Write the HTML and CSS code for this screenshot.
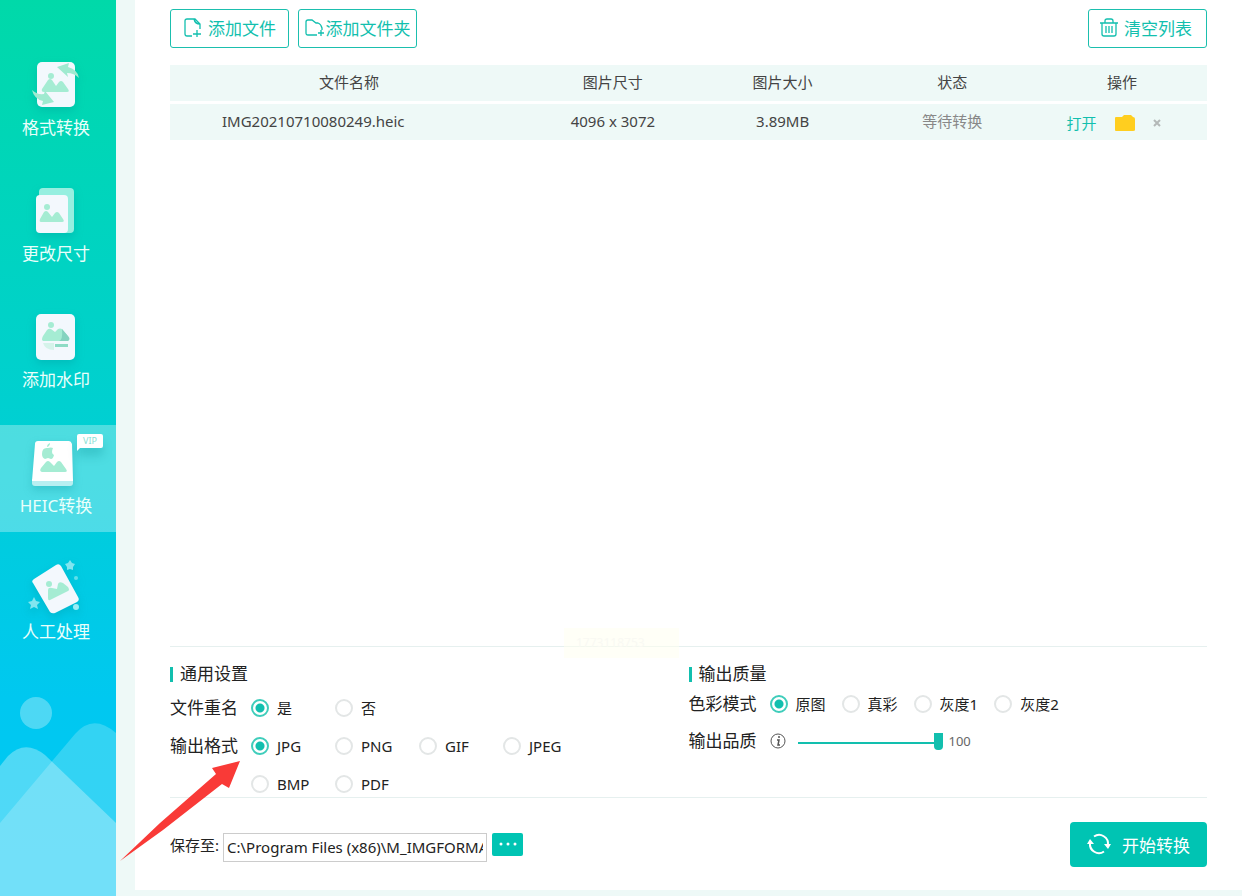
FILE: index.html
```html
<!DOCTYPE html>
<html lang="zh-CN">
<head>
  <meta charset="UTF-8">
  <meta name="viewport" content="width=device-width, initial-scale=1.0">
  <title>HEIC转换</title>
  <link rel="stylesheet" href="styles.css">
</head>
<body>
  <div class="app">
    <aside class="sidebar">
      <nav class="menu">
        <a class="menu-item" href="#format">
          <svg class="menu-icon" viewBox="0 0 48 48">
            <rect x="5" y="1" width="38" height="45" rx="5" fill="#f3f8fd"/>
            <circle cx="19" cy="15" r="3" fill="#a5ecd3"/>
            <path d="M12 31h23q3 0 1-3l-5-7q-2-2-4 0l-3 4-4-6q-2-2-4 0l-6 9q-1 3 2 3z" fill="#a5ecd3"/>
            <path d="M25 6l12-4-1 4q10 3 11 11-5-5-12-5l1 4z" fill="#a0ead0"/>
            <path d="M22 41l-12 3 1-4Q2 38 0 29q5 5 12 4l1-3z" fill="#a0ead0"/>
          </svg>
          <span>格式转换</span>
        </a>
        <a class="menu-item" href="#resize">
          <svg class="menu-icon" viewBox="0 0 48 48">
            <rect x="7" y="1" width="35" height="45" rx="4" fill="#96efe0"/>
            <rect x="4" y="8" width="32" height="38" rx="4" fill="#f3f8fd"/>
            <circle cx="15" cy="20" r="3" fill="#a5ecd3"/>
            <path d="M9 35h21q3 0 1-3l-4-6q-2-2-4 0l-3 4-4-5q-2-2-4 0l-4 7q-1 3 1 3z" fill="#a5ecd3"/>
          </svg>
          <span>更改尺寸</span>
        </a>
        <a class="menu-item" href="#watermark">
          <svg class="menu-icon" viewBox="0 0 48 48">
            <rect x="4" y="1" width="39" height="46" rx="5" fill="#f3f8fd"/>
            <circle cx="19" cy="12" r="3" fill="#a5ecd3"/>
            <path d="M11 28h25q2-3-1-6l-5-6q-2-1-4 0l-3 3-4-3q-2-1-4 1l-4 6q-2 4 0 5z" fill="#a5ecd3"/>
            <path d="M30 16l6 7q3 3 0 5h-9q4-1 3-12z" fill="#85d3bf"/>
            <path d="M11 30h11v7q-9 0-11-7z" fill="#d5f3ea"/>
            <path d="M23 31h13v3H23z" fill="#8edbc5"/>
          </svg>
          <span>添加水印</span>
        </a>
        <a class="menu-item active" href="#heic">
          <svg class="menu-icon" viewBox="0 0 48 48">
            <path d="M0 40h41v4q0 3-3 3H3q-3 0-3-3z" fill="#b8eff1"/>
            <path d="M6 2h31q2 0 3 3l1 37H0L3 5q0-3 3-3z" fill="#ffffff"/>
            <path d="M16 9q3-1 5 0-1 2-1 4 0 2 2 3-1 4-3 4l-3-1-3 1q-3-1-3-5 0-7 6-6z" fill="#a5ecd3"/>
            <path d="M15 8q0-3 3-4 0 3-3 4z" fill="#a5ecd3"/>
            <path d="M10 33h23q3 0 1-3l-5-7q-2-2-4 0l-3 4-4-4q-2-2-4 0l-5 6q-2 3 1 4z" fill="#a5ecd3"/>
          </svg>
          <span>HEIC转换</span>
          <span class="vip">VIP</span>
        </a>
        <a class="menu-item" href="#manual">
          <svg class="menu-icon" viewBox="0 0 48 48">
            <path d="M2 14L24 0q3-2 5 1l17 31q2 3-1 5L23 48q-3 1-5-1L1 18q-2-2 1-4z" fill="#f3f8fd"/>
            <circle cx="17" cy="19" r="3" fill="#a5ecd3"/>
            <path d="M18 35l18-9q2-1 0-4l-5-4q-4-2-5 1l-1 5-5-1q-4-1-4 2v8q0 3 2 2z" fill="#a5ecd3"/>
            <path d="M38-5l2 3 3 1-2 3v3l-3-1-3 1v-3l-2-3 3-1z" fill="#81e5ef"/>
            <path d="M2 32l2 4 4 1-3 3 1 4-4-2-4 2 1-4-3-3 4-1z" fill="#81e5ef"/>
            <circle cx="44" cy="13" r="2" fill="#60dfea"/>
            <circle cx="44" cy="42" r="3" fill="#9becf5"/>
          </svg>
          <span>人工处理</span>
        </a>
      </nav>
      <svg class="sidebar-art" viewBox="0 0 116 200">
        <circle cx="36" cy="17" r="16" fill="#fff" fill-opacity=".3"/>
        <path d="M0 127L75 38q18-21 41-1v163H0z" fill="#fff" fill-opacity=".2"/>
        <path d="M0 70L8 60q17-17 37-1l71 68v73H0z" fill="#fff" fill-opacity=".31"/>
      </svg>
    </aside>

    <main class="panel">
      <div class="toolbar">
        <button class="btn" type="button">
          <svg width="20" height="20" viewBox="0 0 20 20" fill="none" stroke="currentColor" stroke-width="1.3">
            <path d="M9 18H4q-2 0-2-2V3q0-2 2-2h8l5 5v5M11 1q1 5 6 5M14 12v7M10 16h8"/>
          </svg>
          添加文件
        </button>
        <button class="btn btn-folder" type="button">
          <svg width="20" height="20" viewBox="0 0 20 20" fill="none" stroke="currentColor" stroke-width="1.3">
            <path d="M12 17H3q-2 0-2-2V4q0-2 2-2h4l4 3h2q3 1 4 5v2M16 12v6M13 15h6"/>
          </svg>
          添加文件夹
        </button>
        <button class="btn btn-clear" type="button">
          <svg width="20" height="20" viewBox="0 0 20 20" fill="none" stroke="currentColor" stroke-width="1.3">
            <path d="M1 5h18M6 5V3q0-2 2-2h4q2 0 2 2v2M3 5v11q0 2 2 2h10q2 0 2-2V5M7 8v7M10 8v7M13 8v7"/>
          </svg>
          清空列表
        </button>
      </div>

      <div class="file-list">
        <table>
          <thead>
            <tr>
              <th class="col-name">文件名称</th>
              <th>图片尺寸</th>
              <th>图片大小</th>
              <th>状态</th>
              <th>操作</th>
            </tr>
          </thead>
          <tbody>
            <tr>
              <td class="col-name">IMG20210710080249.heic</td>
              <td>4096 x 3072</td>
              <td>3.89MB</td>
              <td class="status">等待转换</td>
              <td>
                <div class="actions">
                  <a href="#open">打开</a>
                  <button class="icon-btn" type="button" aria-label="文件夹">
                    <svg width="22" height="18" viewBox="0 0 22 18"><path d="M2 3h6l2-2h7l2 2q2 0 2 2v11q0 1-2 1H2q-1 0-1-1V4q0-1 1-1z" fill="#ffce1f"/></svg>
                  </button>
                  <button class="icon-btn" type="button" aria-label="删除">
                    <svg width="8" height="8" viewBox="0 0 8 8"><path d="M1 1l6 6M7 1L1 7" stroke="#b4b9b8" stroke-width="2"/></svg>
                  </button>
                </div>
              </td>
            </tr>
          </tbody>
        </table>
      </div>

      <div class="settings">
        <span class="stamp">1773118753</span>
        <section class="general">
          <h2>通用设置</h2>
          <div class="row">
            <span class="row-label">文件重名</span>
            <div class="options-grid">
              <label><input type="radio" name="rename" checked>是</label>
              <label><input type="radio" name="rename">否</label>
            </div>
          </div>
          <div class="row">
            <span class="row-label">输出格式</span>
            <div class="options-grid">
              <label><input type="radio" name="format" checked>JPG</label>
              <label><input type="radio" name="format">PNG</label>
              <label><input type="radio" name="format">GIF</label>
              <label><input type="radio" name="format">JPEG</label>
              <label><input type="radio" name="format">BMP</label>
              <label><input type="radio" name="format">PDF</label>
            </div>
          </div>
        </section>
        <section class="quality">
          <h2>输出质量</h2>
          <div class="row">
            <span class="row-label">色彩模式</span>
            <div class="options">
              <label><input type="radio" name="color" checked>原图</label>
              <label><input type="radio" name="color">真彩</label>
              <label><input type="radio" name="color">灰度1</label>
              <label><input type="radio" name="color">灰度2</label>
            </div>
          </div>
          <div class="row">
            <label class="row-label" for="quality">输出品质</label>
            <svg class="info" width="16" height="16" viewBox="0 0 16 16" fill="none" stroke="#555">
              <circle cx="8" cy="8" r="7"/>
              <path d="M8 4h2M7 7h2l-1 5h2" stroke-width="1.5"/>
            </svg>
            <input class="slider" id="quality" type="range" min="0" max="100" value="100">
            <output for="quality">100</output>
          </div>
        </section>
      </div>

      <div class="footer">
        <label for="path">保存至:</label>
        <input class="path" id="path" type="text" value="C:\Program Files (x86)\M_IMGFORMAT">
        <button class="browse" type="button" aria-label="浏览">
          <svg width="20" height="4" viewBox="0 0 20 4" fill="#fff"><circle cx="3" cy="2" r="1.5"/><circle cx="10" cy="2" r="1.5"/><circle cx="17" cy="2" r="1.5"/></svg>
        </button>
        <button class="start" type="button">
          <svg width="24" height="24" viewBox="0 0 24 24" fill="none" stroke="#fff" stroke-width="2">
            <path d="M7 4.500A9 9 0 0 1 21 13M17 19.500A9 9 0 0 1 3 11"/>
            <path d="M17 12h7l-3 5zM0 12h7L3 7z" fill="#fff" stroke="none"/>
          </svg>
          开始转换
        </button>
      </div>

      <svg class="pointer" width="122" height="102" viewBox="0 0 122 102">
        <path d="M120 1L92 8l4 6L40 63 0 101l43-31 59-46 7 4z" fill="#f93a37"/>
      </svg>
    </main>
  </div>
</body>
</html>
```
FILE: styles.css
```css
* {
  box-sizing: border-box;
}
body {
  margin: 0;
  font-family: "Noto Sans", "Noto Sans CJK SC", sans-serif;
  font-size: 14px;
  color: #222;
  background-color: #eef9f7;
}
button, input {
  font-family: inherit;
}
button {
  cursor: pointer;
}
.app {
  display: flex;
  min-height: 100vh;
}

/* sidebar */
.sidebar {
  flex: 0 0 116px;
  display: flex;
  flex-direction: column;
  justify-content: space-between;
  background: linear-gradient(#00d9a9, #00d0d0 45%, #00c8f0 78%, #00c8f5);
}
.menu {
  display: flex;
  flex-direction: column;
  gap: 19px;
  padding-top: 47px;
}
.menu-item {
  position: relative;
  display: flex;
  flex-direction: column;
  align-items: center;
  gap: 7px;
  height: 107px;
  padding: 14px 4px 0 0;
  color: #e9fffb;
  font-size: 17px;
  line-height: 24px;
  text-decoration: none;
}
.menu-item.active {
  background-color: rgba(255, 255, 255, 0.3);
}
.menu-icon {
  width: 48px;
  height: 48px;
  overflow: visible;
  filter: drop-shadow(0 4px 4px rgba(0, 130, 140, 0.25));
}
.vip {
  position: absolute;
  top: 9px;
  right: 13px;
  width: 26px;
  border-radius: 2px 2px 2px 0;
  background-color: #fff;
  box-shadow: 0 8px 10px rgba(0, 130, 140, 0.25);
  color: #8adfd5;
  font-size: 9px;
  line-height: 14px;
  text-align: center;
}
.vip::after {
  content: "";
  position: absolute;
  top: 100%;
  left: 0;
  border-top: 3px solid #fff;
  border-right: 3px solid transparent;
}
.sidebar-art {
  width: 100%;
  display: block;
}

/* main panel */
.panel {
  position: relative;
  flex: 1;
  min-width: 0;
  display: flex;
  flex-direction: column;
  margin: 0 0 6px 19px;
  padding: 9px 35px 0;
  background-color: #fff;
}
.toolbar {
  display: flex;
  gap: 9px;
}
.btn {
  display: flex;
  align-items: center;
  justify-content: center;
  gap: 5px;
  width: 119px;
  height: 39px;
  padding: 0 0 2px;
  border: 1px solid #1bbfae;
  border-radius: 3px;
  background-color: #fff;
  color: #12bfae;
  font-size: 17px;
  white-space: nowrap;
}
.btn-folder {
  gap: 1px;
}
.btn-clear {
  margin-left: auto;
  padding-right: 4px;
}
.file-list {
  flex: 1;
  padding-top: 14px;
}
table {
  width: 100%;
  table-layout: fixed;
  border-collapse: separate;
  border-spacing: 0 3px;
}
th, td {
  height: 36px;
  padding: 0 0 3px;
  background-color: #eef9f7;
  color: #444;
  font-size: 15px;
  font-weight: 400;
  line-height: 20px;
  text-align: center;
}
.col-name {
  width: 358px;
}
td.col-name {
  padding-left: 52px;
  text-align: left;
}
td.status {
  color: #888;
}
.actions {
  display: flex;
  align-items: center;
  justify-content: center;
  gap: 17px;
  padding: 4px 17px 0 0;
}
.actions a {
  color: #12bfae;
  text-decoration: none;
}
.icon-btn {
  display: flex;
  padding: 0;
  border: none;
  background: none;
}

/* settings */
.settings {
  position: relative;
  display: grid;
  grid-template-columns: 1fr 1fr;
  height: 152px;
  padding-top: 15px;
  border-top: 1px solid #e6f0ef;
  border-bottom: 1px solid #e6f0ef;
}
.stamp {
  position: absolute;
  top: -19px;
  left: 394px;
  padding: 0 34px 0 12px;
  background-color: rgba(255, 255, 240, 0.5);
  color: #f9f9f3;
  font-size: 12px;
  line-height: 30px;
}
h2 {
  display: flex;
  align-items: center;
  gap: 7px;
  margin: 0;
  font-size: 17px;
  font-weight: 400;
  line-height: 24px;
}
h2::before {
  content: "";
  width: 3px;
  height: 15px;
  background-color: #12bfae;
}
.row {
  display: flex;
  align-items: flex-start;
  line-height: 20px;
}
.row-label {
  width: 81px;
  font-size: 17px;
}
.general .row {
  margin-top: 12px;
}
.general .row + .row {
  margin-top: 18px;
}
.quality .row {
  align-items: center;
  margin-top: 8px;
}
.quality .row + .row {
  margin-top: 17px;
}
.options-grid {
  display: grid;
  grid-template-columns: repeat(4, 84px);
  row-gap: 18px;
}
.options {
  display: flex;
  gap: 16px;
}
.options label, .options-grid label {
  display: flex;
  align-items: center;
  gap: 8px;
  font-size: 15px;
}
input[type="radio"] {
  appearance: none;
  width: 18px;
  height: 18px;
  margin: 0;
  border: 2px solid #e3e6e6;
  border-radius: 50%;
  background-color: #fff;
}
input[type="radio"]:checked {
  border-color: #3fcdbb;
  background: radial-gradient(circle, #12bfae 4px, #fff 5px);
}
.info {
  margin-right: 12px;
}
.slider {
  appearance: none;
  width: 145px;
  height: 18px;
  margin: 0;
  background: linear-gradient(#12bfae, #12bfae) 0 10px / 100% 2px no-repeat;
}
.slider::-webkit-slider-thumb {
  appearance: none;
  width: 9px;
  height: 17px;
  border-radius: 0 0 4px 4px;
  background-color: #12bfae;
}
output {
  margin-left: 6px;
  color: #666;
  font-size: 13px;
}

/* footer */
.footer {
  display: flex;
  align-items: center;
  height: 92px;
}
.footer label {
  margin-right: 4px;
  font-size: 15px;
}
.path {
  width: 264px;
  height: 29px;
  margin-top: 6px;
  padding: 0 3px;
  border: 1px solid #ccc;
  color: #222;
  font-size: 15px;
}
.browse {
  display: flex;
  align-items: center;
  justify-content: center;
  width: 31px;
  height: 23px;
  margin-left: 5px;
  padding: 0;
  border: none;
  border-radius: 2px;
  background-color: #00c4b3;
}
.start {
  display: flex;
  align-items: center;
  justify-content: center;
  gap: 11px;
  width: 137px;
  height: 45px;
  margin-left: auto;
  padding: 0;
  border: none;
  border-radius: 4px;
  background-color: #00c4b3;
  color: #fff;
  font-size: 17px;
}
.pointer {
  position: absolute;
  bottom: 28px;
  left: -15px;
  pointer-events: none;
}
```
